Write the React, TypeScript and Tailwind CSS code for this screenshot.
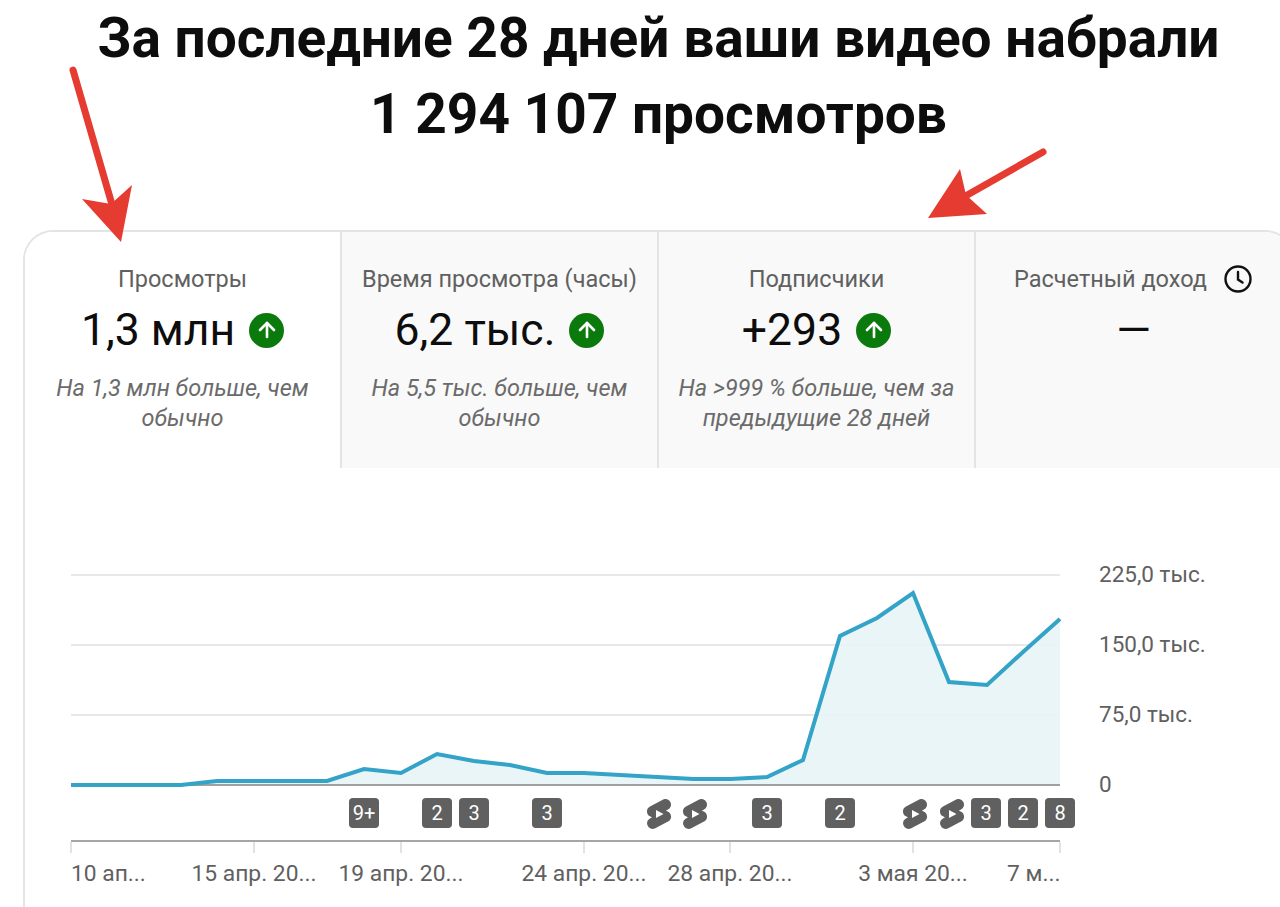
import { ArrowUp } from 'lucide-react';
import { SiYoutubeshorts } from 'react-icons/si';

type Metric = {
  title: string;
  value: string;
  note?: string[];
  up?: boolean;
  clock?: boolean;
  active?: boolean;
};

const metrics: Metric[] = [
  { title: 'Просмотры', value: '1,3 млн', note: ['На 1,3 млн больше, чем', 'обычно'], up: true, active: true },
  { title: 'Время просмотра (часы)', value: '6,2 тыс.', note: ['На 5,5 тыс. больше, чем', 'обычно'], up: true },
  { title: 'Подписчики', value: '+293', note: ['На >999 % больше, чем за', 'предыдущие 28 дней'], up: true },
  { title: 'Расчетный доход', value: '—', clock: true },
];

// page coordinates, the plot svg has the same numbers in its viewBox
const points = [
  [71, 785], [108, 785], [144, 785], [181, 785], [217, 781], [254, 781], [291, 781], [327, 781],
  [364, 769], [401, 773], [437, 754], [474, 761], [510, 765], [547, 773], [584, 773], [620, 775],
  [657, 777], [694, 779], [730, 779], [767, 777], [803, 760], [840, 636], [877, 618], [913, 593],
  [949, 682], [987, 685], [1023, 652], [1060, 619],
];

const linePoints = points.map((p) => p.join(',')).join(' ');
const areaPoints = `71,785 ${linePoints} 1060,785`;

const yLabels = [
  { y: 575, label: '225,0 тыс.' },
  { y: 645, label: '150,0 тыс.' },
  { y: 715, label: '75,0 тыс.' },
  { y: 785, label: '0' },
];

const ticks = [71, 254, 401, 584, 730, 913, 1060];

const xLabels = [
  { x: 254, label: '15 апр. 20...' },
  { x: 401, label: '19 апр. 20...' },
  { x: 584, label: '24 апр. 20...' },
  { x: 730, label: '28 апр. 20...' },
  { x: 913, label: '3 мая 20...' },
];

const markers = [
  { x: 364, label: '9+' },
  { x: 437, label: '2' },
  { x: 474, label: '3' },
  { x: 547, label: '3' },
  { x: 659 },
  { x: 695 },
  { x: 767, label: '3' },
  { x: 840, label: '2' },
  { x: 915 },
  { x: 952 },
  { x: 986, label: '3' },
  { x: 1023, label: '2' },
  { x: 1060, label: '8' },
];

const UpBadge = () => (
  <span className="flex h-[35px] w-[35px] items-center justify-center rounded-full bg-[#0a7a0c]">
    <ArrowUp size={24} strokeWidth={2.6} className="text-white" />
  </span>
);

const ClockIcon = () => (
  <svg width="30" height="30" viewBox="0 0 30 30" fill="none" stroke="#111" strokeWidth="2.4" strokeLinecap="round">
    <circle cx="15" cy="15" r="12.5" />
    <path d="M15 8v7.5l4.5 3" />
  </svg>
);

const MetricTab = ({ title, value, note, up, clock, active }: Metric) => (
  <div
    className={`flex shrink-0 flex-col items-center pt-[32px] ${
      active ? 'w-[315px] bg-white' : 'w-[317px] border-l-2 border-[#e4e4e4] bg-[#f9f9f9]'
    }`}
  >
    <div className="flex h-[30px] items-center gap-[16px] whitespace-nowrap text-[23.5px] leading-[30px] text-[#606060]">
      <span>{title}</span>
      {clock && <ClockIcon />}
    </div>
    <div className="mt-[11px] flex h-[50px] items-center gap-[14px] whitespace-nowrap text-[44.5px] leading-[50px] text-[#0d0d0d]">
      <span>{value}</span>
      {up && <UpBadge />}
    </div>
    {note && (
      <div className="mt-[18px] whitespace-nowrap text-center text-[23.5px] italic leading-[30px] text-[#6b6b6b]">
        {note.map((line) => (
          <div key={line}>{line}</div>
        ))}
      </div>
    )}
  </div>
);

const Plot = () => (
  <svg width="1000" height="290" viewBox="70 570 1000 290" className="block" fill="none">
    {[575, 645, 715].map((y) => (
      <line key={y} x1="71" x2="1060" y1={y} y2={y} stroke="#e8e8e8" strokeWidth="2" />
    ))}
    <polygon points={areaPoints} fill="#e7f4f7" fillOpacity="0.88" />
    <line x1="71" x2="1060" y1="785" y2="785" stroke="#a0a0a0" strokeWidth="2" />
    <polyline points={linePoints} stroke="#33a3c7" strokeWidth="4" strokeLinejoin="miter" />
    <line x1="71" x2="1060" y1="841" y2="841" stroke="#a6a6a6" strokeWidth="2" />
    {ticks.map((x) => (
      <line key={x} x1={x} x2={x} y1="842" y2="853" stroke="#e2e2e2" strokeWidth="2" />
    ))}
  </svg>
);

const Chart = () => (
  <div className="relative ml-[45px] mt-[102px] h-[339px] w-[1200px]">
    <Plot />

    {/* y axis labels */}
    {yLabels.map((item) => (
      <span
        key={item.y}
        className="absolute left-[1029px] whitespace-nowrap text-[22.5px] leading-[30px] text-[#606060]"
        style={{ top: item.y - 570 - 16 }}
      >
        {item.label}
      </span>
    ))}

    {/* video markers */}
    {markers.map((m) =>
      m.label ? (
        <span
          key={m.x}
          className="absolute top-[228px] flex h-[30px] w-[30px] items-center justify-center rounded-[4px] bg-[#606060] text-[20px] text-white"
          style={{ left: m.x - 70 - 15 }}
        >
          {m.label}
        </span>
      ) : (
        <span key={m.x} className="absolute top-[229px] text-[#5f5f5f]" style={{ left: m.x - 70 - 15 }}>
          <SiYoutubeshorts size={30} />
        </span>
      ),
    )}

    {/* x axis labels */}
    <span className="absolute left-px top-[289px] text-[22.8px] leading-[30px] text-[#606060]">10 ап...</span>
    {xLabels.map((item) => (
      <span
        key={item.x}
        className="absolute top-[289px] -translate-x-1/2 whitespace-nowrap text-[22.8px] leading-[30px] text-[#606060]"
        style={{ left: item.x - 70 }}
      >
        {item.label}
      </span>
    ))}
    <span className="absolute left-[937px] top-[289px] whitespace-nowrap text-[22.8px] leading-[30px] text-[#606060]">7 м...</span>
  </div>
);

const Arrows = () => (
  <svg className="pointer-events-none absolute left-0 top-0" width="1280" height="260" fill="none">
    <path d="M73 70L113 208" stroke="#e53b30" strokeWidth="7" strokeLinecap="round" />
    <polygon points="121,242 82,199 111,204 132,185" fill="#e53b30" />
    <path d="M1043 152L962 198" stroke="#e53b30" strokeWidth="7" strokeLinecap="round" />
    <polygon points="928,218 960,169 966,195 987,214" fill="#e53b30" />
  </svg>
);

export default function App() {
  return (
    <div className="relative h-[907px] w-[1280px] overflow-hidden bg-white font-['Roboto',sans-serif]">
      <h1 className="whitespace-nowrap pl-[37px] text-center text-[55px] font-bold leading-[76px] text-[#0d0d0d]">
        За последние 28 дней ваши видео набрали
        <br />
        1 294 107 просмотров
      </h1>

      <div className="ml-[23px] mt-[78px] w-[1272px] overflow-hidden rounded-t-[30px] border-x-2 border-t-2 border-[#e4e4e4]">
        <div className="flex h-[236px]">
          {metrics.map((m) => (
            <MetricTab key={m.title} {...m} />
          ))}
        </div>
        <Chart />
      </div>

      <Arrows />
    </div>
  );
}
